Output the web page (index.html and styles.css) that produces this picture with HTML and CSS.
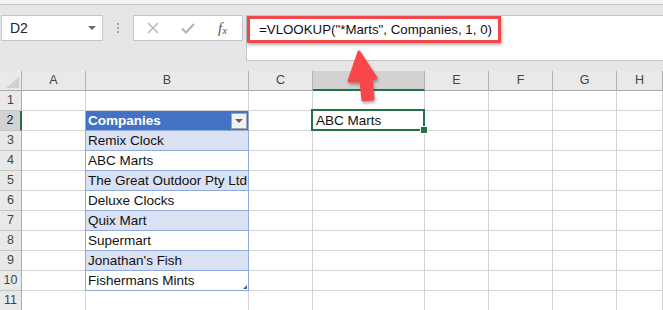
FILE: index.html
```html
<!DOCTYPE html>
<html>
<head>
<meta charset="utf-8">
<link rel="stylesheet" href="styles.css">
</head>
<body>
<div class="app">
  <div class="titlestrip"></div>
  <div class="toolbar">
    <div class="namebox">
      <span class="nb-text">D2</span>
      <span class="nb-caret"></span>
    </div>
    <div class="grip"><i></i><i></i><i></i></div>
    <div class="fbuttons">
      <svg class="ico" width="14" height="14" viewBox="0 0 14 14"><path d="M2 2 L12 12 M12 2 L2 12" stroke="#b4b4b4" stroke-width="1.4" fill="none"/></svg>
      <svg class="ico" width="16" height="14" viewBox="0 0 16 14"><path d="M2 7.5 L6 11.5 L14 3" stroke="#b4b4b4" stroke-width="2.2" fill="none"/></svg>
      <span class="fx">f<sub>x</sub></span>
    </div>
    <div class="formulabar">
      <div class="highlight">=VLOOKUP("*Marts", Companies, 1, 0)</div>
    </div>
  </div>
  <div class="sheet">
    <div class="c corner"></div>
    <div class="c ch">A</div>
    <div class="c ch">B</div>
    <div class="c ch">C</div>
    <div class="c ch sel">D</div>
    <div class="c ch">E</div>
    <div class="c ch">F</div>
    <div class="c ch">G</div>
    <div class="c ch">H</div>

    <div class="c rh">1</div><div class="c"></div><div class="c"></div><div class="c"></div><div class="c"></div><div class="c"></div><div class="c"></div><div class="c"></div><div class="c"></div>

    <div class="c rh sel">2</div><div class="c"></div>
    <div class="c t thead"><span>Companies</span><span class="filter"><i></i></span></div>
    <div class="c"></div><div class="c active">ABC Marts</div><div class="c"></div><div class="c"></div><div class="c"></div><div class="c"></div>

    <div class="c rh">3</div><div class="c"></div><div class="c t band">Remix Clock</div><div class="c"></div><div class="c"></div><div class="c"></div><div class="c"></div><div class="c"></div><div class="c"></div>
    <div class="c rh">4</div><div class="c"></div><div class="c t">ABC Marts</div><div class="c"></div><div class="c"></div><div class="c"></div><div class="c"></div><div class="c"></div><div class="c"></div>
    <div class="c rh">5</div><div class="c"></div><div class="c t band">The Great Outdoor Pty Ltd</div><div class="c"></div><div class="c"></div><div class="c"></div><div class="c"></div><div class="c"></div><div class="c"></div>
    <div class="c rh">6</div><div class="c"></div><div class="c t">Deluxe Clocks</div><div class="c"></div><div class="c"></div><div class="c"></div><div class="c"></div><div class="c"></div><div class="c"></div>
    <div class="c rh">7</div><div class="c"></div><div class="c t band">Quix Mart</div><div class="c"></div><div class="c"></div><div class="c"></div><div class="c"></div><div class="c"></div><div class="c"></div>
    <div class="c rh">8</div><div class="c"></div><div class="c t">Supermart</div><div class="c"></div><div class="c"></div><div class="c"></div><div class="c"></div><div class="c"></div><div class="c"></div>
    <div class="c rh">9</div><div class="c"></div><div class="c t band">Jonathan's Fish</div><div class="c"></div><div class="c"></div><div class="c"></div><div class="c"></div><div class="c"></div><div class="c"></div>
    <div class="c rh">10</div><div class="c"></div><div class="c t last">Fishermans Mints</div><div class="c"></div><div class="c"></div><div class="c"></div><div class="c"></div><div class="c"></div><div class="c"></div>
    <div class="c rh">11</div><div class="c"></div><div class="c"></div><div class="c"></div><div class="c"></div><div class="c"></div><div class="c"></div><div class="c"></div><div class="c"></div>
  </div>
  <svg class="arrow" width="60" height="70" viewBox="0 0 60 70">
    <defs>
      <filter id="sh" x="-30%" y="-30%" width="160%" height="160%">
        <feDropShadow dx="1" dy="2" stdDeviation="1.5" flood-color="#000" flood-opacity="0.35"/>
      </filter>
    </defs>
    <path d="M19 9 L36 35 L31 36 L33 56 L23 57 L21 38 L9 38 Z" fill="#f7474b" stroke="#f7474b" stroke-width="3" stroke-linejoin="round" filter="url(#sh)"/>
  </svg>
</div>
</body>
</html>
```
FILE: styles.css
```css
* { box-sizing: border-box; }
html, body { margin: 0; padding: 0; background: #ffffff; }
body { font-family: "Liberation Sans", Arial, sans-serif; width: 663px; height: 310px; overflow: hidden; }
.app { position: relative; width: 663px; height: 310px; overflow: hidden; }

.titlestrip { height: 5px; background: #f3f3f3; border-bottom: 1px solid #c9c9c9; }

.toolbar {
  height: 66px;
  background: #e6e6e6;
  padding-top: 10px;
  display: flex;
  align-items: flex-start;
}
.namebox {
  margin-left: 1px;
  width: 102px;
  height: 26px;
  background: #fff;
  border: 1px solid #c6c6c6;
  display: flex;
  align-items: center;
  justify-content: space-between;
  padding: 0 6px 0 8px;
}
.nb-text { font-size: 14px; color: #222; }
.nb-caret { width: 0; height: 0; border-left: 4px solid transparent; border-right: 4px solid transparent; border-top: 4px solid #6b6b6b; }
.grip { width: 30px; height: 26px; display: flex; flex-direction: column; align-items: center; justify-content: center; gap: 2px; }
.grip i { width: 2px; height: 2px; background: #a8a8a8; display: block; }
.fbuttons {
  width: 110px;
  height: 26px;
  background: #fff;
  border: 1px solid #c6c6c6;
  display: flex;
  align-items: center;
  padding-left: 12px;
  gap: 20px;
}
.fx { font-family: "Liberation Serif", serif; font-style: italic; font-size: 15px; color: #555; margin-left: 2px; }
.fx sub { font-size: 11px; vertical-align: -1px; }
.formulabar {
  margin-left: 3px;
  flex: 1;
  height: 46px;
  background: #fff;
  border: 1px solid #c6c6c6;
  border-right: none;
}
.highlight {
  width: 254px;
  height: 27px;
  border: 3px solid #f0474a;
  box-shadow: 1px 2px 3px rgba(0,0,0,0.3);
  font-size: 13.3px;
  color: #111;
  padding-left: 9px;
  line-height: 21px;
  white-space: nowrap;
}

.sheet {
  display: grid;
  grid-template-columns: 22px 64px 163px 64px 112px 64px 64px 64px 46px;
  grid-auto-rows: 20px;
}
.c {
  border-right: 1px solid #d4d4d4;
  border-bottom: 1px solid #d4d4d4;
  font-size: 13.5px;
  line-height: 19px;
  color: #111;
  white-space: nowrap;
  overflow: visible;
  padding-left: 2px;
}
.ch {
  background: #e9e9e9;
  border-right-color: #b1b1b1;
  border-bottom-color: #ababab;
  text-align: center;
  font-size: 12.5px;
  color: #444;
  padding-left: 0;
}
.ch.sel { background: #d2d2d2; border-bottom: 2px solid #217346; color: #222; }
.corner { background: #e9e9e9; border-right-color: #b1b1b1; border-bottom-color: #ababab; position: relative; }
.corner::after {
  content: "";
  position: absolute;
  right: 2px; bottom: 2px;
  width: 0; height: 0;
  border-left: 13px solid transparent;
  border-bottom: 11px solid #d0d0d0;
}
.rh {
  background: #e9e9e9;
  border-right-color: #ababab;
  border-bottom-color: #c6c6c6;
  text-align: center;
  font-size: 12.5px;
  color: #444;
  padding-left: 0;
}
.rh.sel { background: #d2d2d2; border-right: 2px solid #217346; color: #222; }

.t {
  border-right-color: #8ea9db;
  border-bottom-color: #8ea9db;
  box-shadow: -1px 0 0 #8ea9db;
}
.band { background: #d9e1f2; }
.thead {
  background: #4472c4;
  color: #fff;
  font-weight: bold;
  display: flex;
  justify-content: space-between;
  align-items: center;
  padding-right: 1px;
}
.filter {
  width: 16px;
  height: 16px;
  background: #f2f2f2;
  border: 1px solid #a6a6a6;
  display: flex;
  align-items: center;
  justify-content: center;
}
.filter i { width: 0; height: 0; border-left: 4px solid transparent; border-right: 4px solid transparent; border-top: 4px solid #606060; display: block; }
.last { position: relative; }
.last::after {
  content: "";
  position: absolute;
  right: 1px; bottom: 1px;
  width: 0; height: 0;
  border-left: 4px solid transparent;
  border-bottom: 4px solid #3c5fa8;
}
.active { position: relative; z-index: 2; padding-left: 3px; }
.active::after {
  content: "";
  position: absolute;
  left: -2px; top: -2px; right: -1px; bottom: -1px;
  border: 2px solid #217346;
}
.active::before {
  content: "";
  position: absolute;
  right: -4px; bottom: -4px;
  width: 6px; height: 6px;
  background: #217346;
  border: 1px solid #fff;
  z-index: 3;
}

.arrow { position: absolute; left: 340px; top: 43px; z-index: 5; }
```
